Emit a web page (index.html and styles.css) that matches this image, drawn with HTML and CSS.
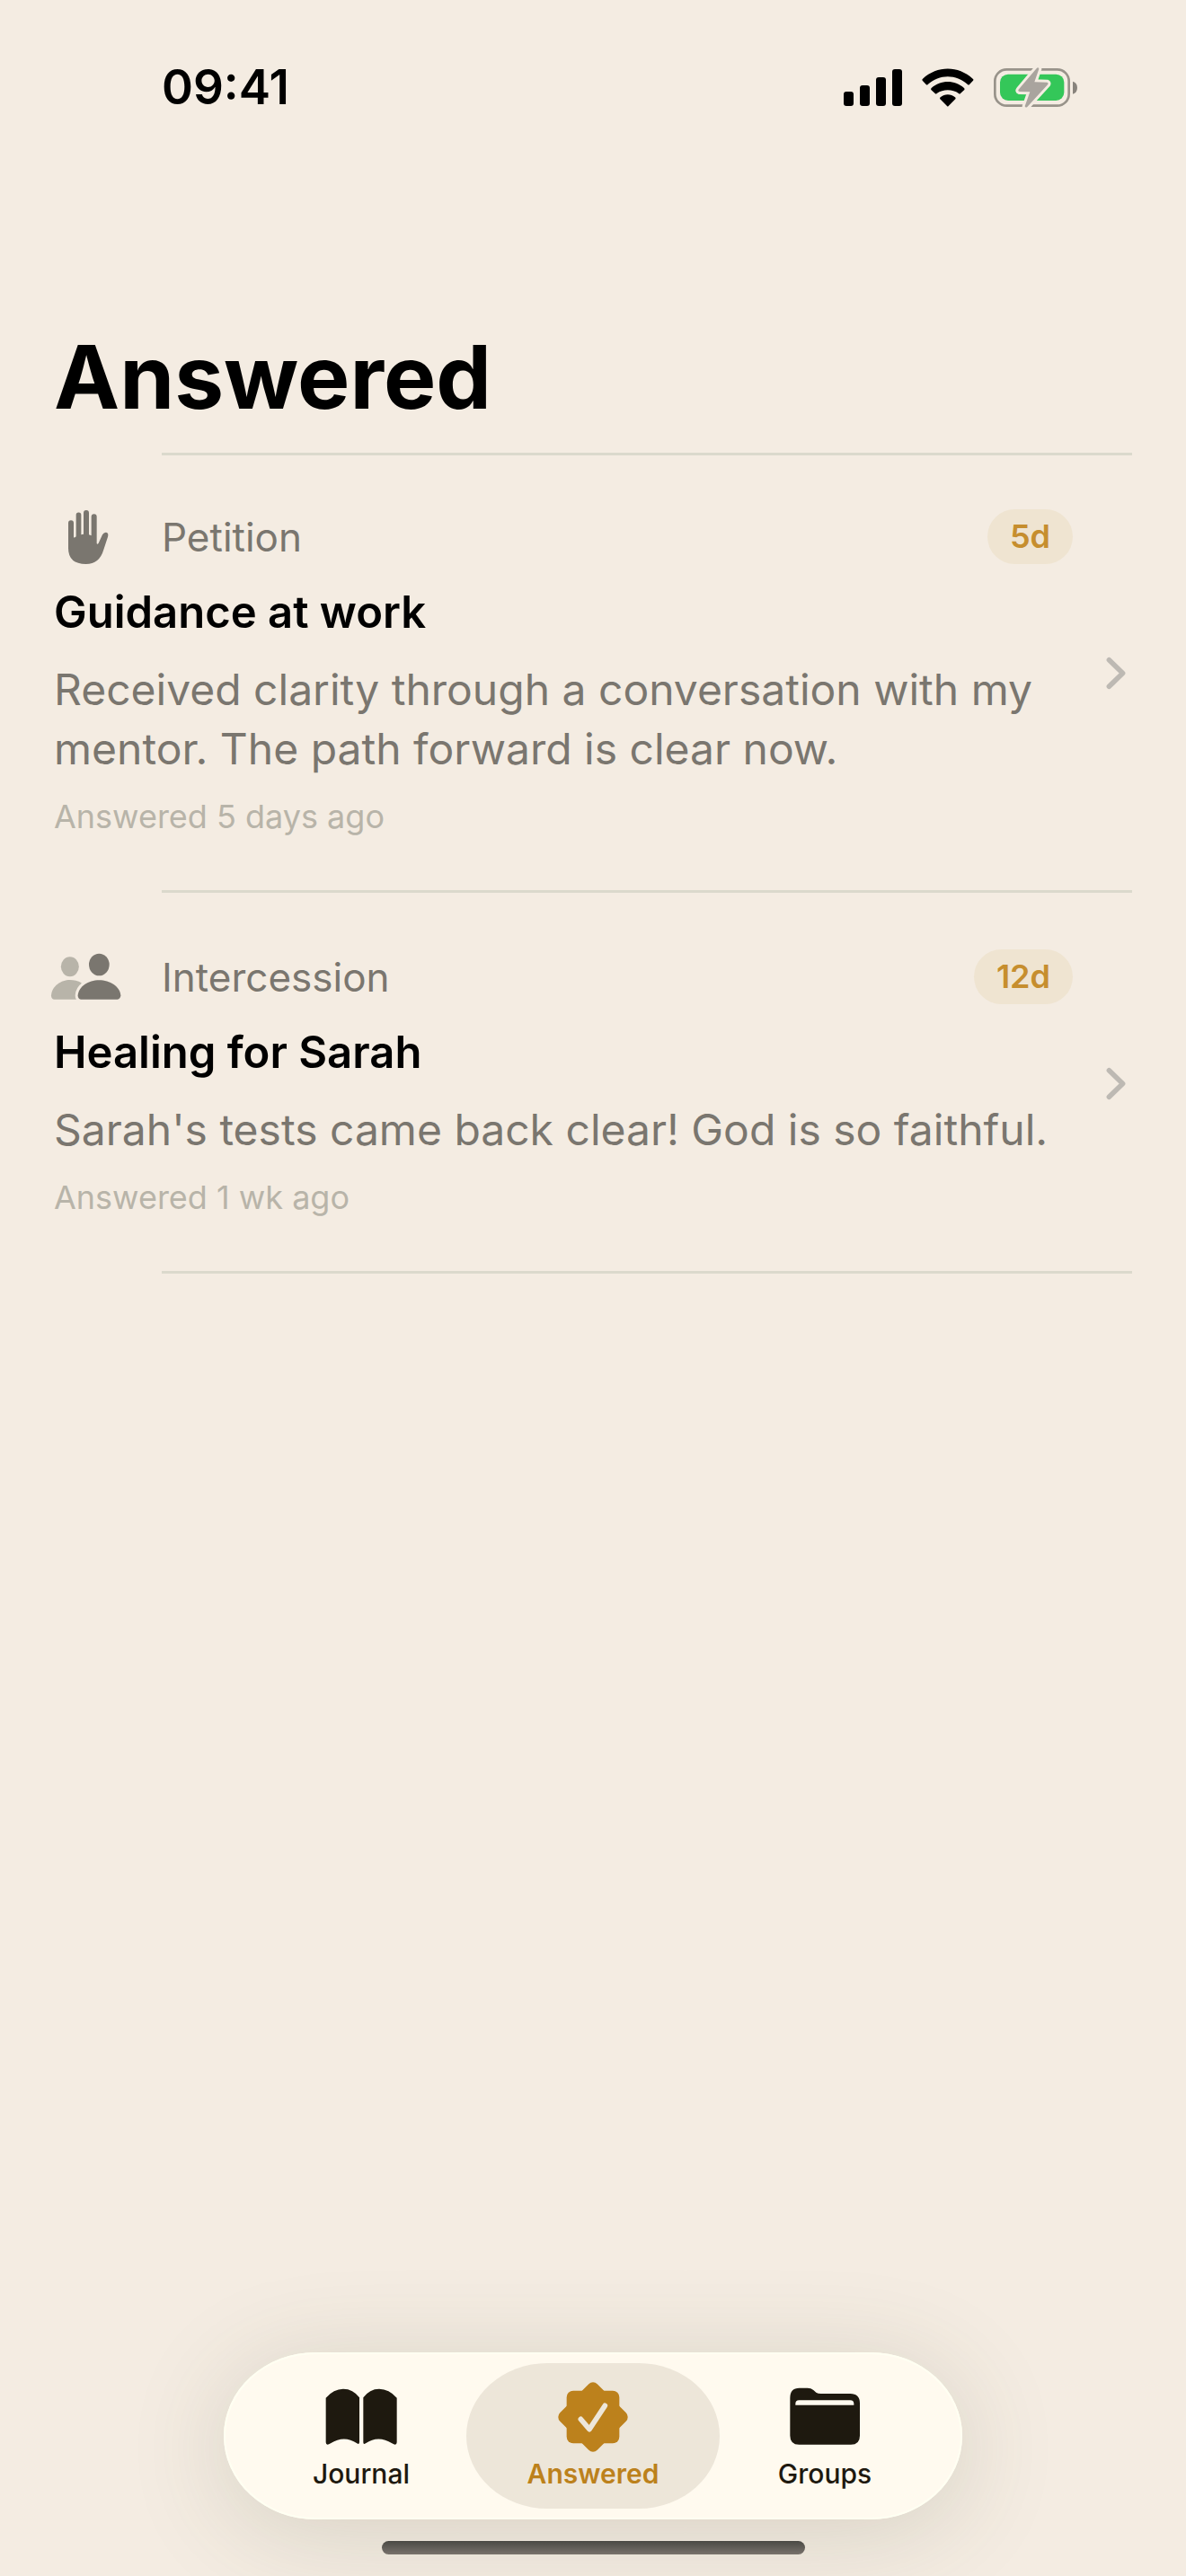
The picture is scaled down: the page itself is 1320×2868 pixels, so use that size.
FILE: index.html
```html
<!DOCTYPE html>
<html lang="en">
<head>
<meta charset="utf-8">
<meta name="viewport" content="width=device-width">
<title>Answered</title>
<link rel="stylesheet" href="styles.css">
</head>
<body>
<div class="screen">
  <header class="status">
    <time class="clock">09:41</time>
    <div class="indicators">
      <svg class="signal" viewBox="111 78 195 123" aria-hidden="true">
        <rect x="111" y="153" width="33" height="48" rx="9"/>
        <rect x="165" y="132" width="33" height="69" rx="9"/>
        <rect x="219" y="105" width="33" height="96" rx="9"/>
        <rect x="273" y="78" width="33" height="123" rx="9"/>
      </svg>
      <svg class="wifi" viewBox="374 74 174 129" aria-hidden="true">
        <path d="M376 115Q374 112 377 109C425 64 496 64 544 109Q548 112 545 115L533 128Q530 131 527 128C489 93 432 93 394 128Q391 131 388 128Z"/>
        <path d="M405 146Q403 143 406 140C437 112 484 112 515 140Q518 143 516 146L503 158Q500 161 497 158C476 143 445 143 424 158Q421 161 418 158Z"/>
        <path d="M435 177Q433 174 436 171C450 159 471 159 485 171Q488 174 486 177L463 200Q460 203 458 200Z"/>
      </svg>
      <svg class="battery" viewBox="615 72 282 135" aria-hidden="true">
        <rect class="battery-case" x="619" y="79" width="247" height="121" rx="39"/>
        <rect class="battery-level" x="636" y="95" width="214" height="88" rx="27"/>
        <path class="battery-cap" d="M879 119Q894 124 894 140Q894 156 879 161Z"/>
        <path class="bolt-gap" d="M759 74Q764 70 766 77L751 121L793 122Q799 124 795 130L727 204Q721 208 719 202L736 154L701 153Q694 151 699 145Z"/>
        <path class="bolt" d="M759 74Q764 70 766 77L751 121L793 122Q799 124 795 130L727 204Q721 208 719 202L736 154L701 153Q694 151 699 145Z"/>
      </svg>
    </div>
  </header>

  <main class="content">
    <h1 class="title">Answered</h1>
    <ul class="prayers">
      <li class="prayer">
        <a class="prayer-link" href="#guidance">
          <div class="prayer-body">
            <div class="meta">
              <span class="kind-icon">
                <svg viewBox="48 75 240 192" aria-hidden="true">
                  <path class="ink" d="M108 124A9 9 0 0 1 126 124V171Q127 175 134 169V97A8.500 8.500 0 0 1 151 97V163L159 161V90A9 9 0 0 1 177 90V163L185 166V103A9 9 0 0 1 203 103V192Q205 197 209 191L222 163Q228 153 237 156Q243 160 240 170L226 213Q212 261 167 261Q108 261 108 208Z"/>
                </svg>
              </span>
              <span class="kind">Petition</span>
              <span class="age">5d</span>
            </div>
            <h2 class="name">Guidance at work</h2>
            <p class="note">Received clarity through a conversation with my mentor. The path forward is clear now.</p>
            <p class="when">Answered 5 days ago</p>
          </div>
          <svg class="chevron" viewBox="514 571 66 112" aria-hidden="true"><path d="M524 582L570 627L524 672"/></svg>
        </a>
      </li>
      <li class="prayer">
        <a class="prayer-link" href="#healing">
          <div class="prayer-body">
            <div class="meta">
              <span class="kind-icon">
                <svg viewBox="48 45 240 192" aria-hidden="true">
                  <ellipse class="ink-light" cx="113.500" cy="106" rx="30" ry="33"/>
                  <path class="ink-light" d="M51 202C53 170 85 150 113 150Q134 150 152 160L140 215H60Q51 214 51 202Z"/>
                  <path class="cutout" d="M140 202C142 172 175 151 211 151C247 151 281 172 283 202Q282 214 272 215H150Q140 214 140 202Z"/>
                  <ellipse class="ink" cx="211" cy="99" rx="34" ry="37"/>
                  <path class="ink" d="M140 202C142 172 175 151 211 151C247 151 281 172 283 202Q282 214 272 215H150Q140 214 140 202Z"/>
                </svg>
              </span>
              <span class="kind">Intercession</span>
              <span class="age">12d</span>
            </div>
            <h2 class="name">Healing for Sarah</h2>
            <p class="note">Sarah's tests came back clear! God is so faithful.</p>
            <p class="when">Answered 1 wk ago</p>
          </div>
          <svg class="chevron" viewBox="514 571 66 112" aria-hidden="true"><path d="M524 582L570 627L524 672"/></svg>
        </a>
      </li>
    </ul>
  </main>

  <footer class="dock">
    <nav class="tabs" aria-label="Sections">
      <a class="tab" href="#journal">
        <svg class="tab-icon" viewBox="400 156 234 234" aria-hidden="true">
          <path d="M399 209Q425 179 457 179Q490 179 511 208V358Q510 366 503 361Q460 332 415 361Q400 371 399 358Z"/>
          <path d="M524 208Q545 179 577 179Q610 179 636 209V358Q635 371 620 361Q574 332 532 361Q524 366 524 358Z"/>
        </svg>
        <span>Journal</span>
      </a>
      <a class="tab tab-current" href="#answered" aria-current="page">
        <svg class="tab-icon" viewBox="1172 157 234 234" aria-hidden="true">
          <rect x="1201" y="186" width="176" height="176" rx="22"/>
          <rect x="1201" y="186" width="176" height="176" rx="20" transform="rotate(45 1289 274)"/>
          <path class="check" d="M1248 281L1277 315L1329 236"/>
        </svg>
        <span>Answered</span>
      </a>
      <a class="tab" href="#groups">
        <svg class="tab-icon" viewBox="686 157 234 234" aria-hidden="true">
          <path d="M687 210Q687 177 718 177H745Q757 177 765 184L774 192Q780 196 790 196H888Q920 196 920 228V336Q920 366 890 366H717Q687 366 687 336Z"/>
          <path class="slot" d="M705 234V230Q705 218 717 218H888Q900 218 900 230V234Z"/>
        </svg>
        <span>Groups</span>
      </a>
    </nav>
    <div class="home-bar"></div>
  </footer>
</div>
</body>
</html>
```
FILE: styles.css
```css
:root {
  --page: #f4ece2;
  --ink: #7a766f;
  --ink-light: #b8b4a9;
  --line: #dbd9cc;
  --gold: #bc811c;
  --tab-ink: #1e190f;
  --bar: #fffaef;
}

* {
  box-sizing: border-box;
}

body {
  margin: 0;
  background: var(--page);
  color: #000;
  font-family: Inter, "Liberation Sans", sans-serif;
}

h1,
h2,
p,
ul {
  margin: 0;
  padding: 0;
}

a {
  color: inherit;
  text-decoration: none;
}

svg {
  display: block;
  flex: none;
}

.screen {
  display: flex;
  flex-direction: column;
  min-height: 100vh;
}

/* Status bar */

.status {
  display: flex;
  align-items: center;
  justify-content: space-between;
  padding: 65px 120px 0 180px;
}

.clock {
  font-size: 53px;
  font-weight: 600;
  line-height: 64px;
}

.indicators {
  display: flex;
  align-items: center;
  gap: 22px;
}

.signal {
  width: 65px;
  height: 41px;
}

.wifi {
  width: 58px;
  height: 43px;
}

.battery {
  width: 94px;
  height: 45px;
}

.battery-case {
  fill: none;
  stroke: #98938a;
  stroke-width: 8;
}

.battery-level {
  fill: #34c759;
}

.battery-cap {
  fill: #88837c;
}

.bolt {
  fill: #a9a49e;
}

.bolt-gap {
  fill: var(--page);
  stroke: var(--page);
  stroke-width: 18;
  stroke-linejoin: round;
}

/* Prayer list */

.content {
  padding: 231px 60px 0;
}

.title {
  font-size: 98px;
  font-weight: 700;
  line-height: 120px;
}

.prayers {
  margin-top: 24px;
  list-style: none;
}

.prayer::after,
.prayers::before {
  display: block;
  height: 3px;
  margin-left: 120px;
  background: var(--line);
  content: "";
}

.prayer-link {
  display: flex;
  align-items: center;
  justify-content: space-between;
  padding: 60px 7px 60px 0;
}

.prayer + .prayer .prayer-link {
  padding-top: 63px;
}

.prayer-body {
  flex: 1;
  margin-right: 37px;
}

.meta {
  display: flex;
  align-items: center;
  height: 61px;
}

.kind-icon {
  display: flex;
  justify-content: center;
  width: 72px;
  margin-right: 48px;
}

.kind-icon svg {
  width: 80px;
  height: 64px;
}

.ink {
  fill: var(--ink);
}

.ink-light {
  fill: var(--ink-light);
}

.cutout {
  fill: var(--page);
  stroke: var(--page);
  stroke-width: 18;
}

.kind {
  flex: 1;
  color: var(--ink);
  font-size: 44px;
}

.age {
  padding: 8px 25px;
  border-radius: 31px;
  background: #efe4d1;
  color: #c68e2e;
  font-size: 36px;
  font-weight: 600;
  line-height: 45px;
}

.name {
  margin-top: 24px;
  font-size: 49px;
  font-weight: 600;
  line-height: 60px;
}

.note {
  margin-top: 23px;
  color: var(--ink);
  font-size: 48px;
  line-height: 66px;
}

.when {
  margin-top: 20px;
  color: var(--ink-light);
  font-size: 36px;
  line-height: 44px;
}

.chevron {
  width: 22px;
  height: 37px;
  fill: none;
  stroke: #bdb9b3;
  stroke-width: 17;
  stroke-linecap: round;
  stroke-linejoin: round;
}

/* Bottom tab bar */

.dock {
  display: flex;
  flex-direction: column;
  align-items: center;
  gap: 24px;
  margin-top: auto;
  padding-bottom: 24px;
}

.tabs {
  display: grid;
  grid-template-columns: repeat(3, 258px);
  padding: 12px 24px;
  border-radius: 102px / 93px;
  background: var(--bar);
  box-shadow: inset 0 0 0 2px #fffff2, 0 14px 110px rgba(70, 75, 45, 0.17);
}

.tab {
  display: flex;
  flex-direction: column;
  align-items: center;
  gap: 6px;
  margin: 0 -12px;
  padding: 21px 0;
  border-radius: 90px / 81px;
  color: var(--tab-ink);
  font-size: 30px;
  font-weight: 500;
  line-height: 36px;
}

.tab-current {
  background: #ede6d9;
  color: var(--gold);
  font-weight: 600;
}

.tab-icon {
  width: 78px;
  height: 78px;
  fill: currentColor;
  overflow: visible;
}

.check {
  fill: none;
  stroke: #ede6d9;
  stroke-width: 17;
  stroke-linecap: round;
  stroke-linejoin: round;
}

.slot {
  fill: var(--bar);
}

.home-bar {
  width: 471px;
  height: 15px;
  border-radius: 8px;
  background: linear-gradient(#4a4944, #78726c);
  z-index: 1;
}
```
